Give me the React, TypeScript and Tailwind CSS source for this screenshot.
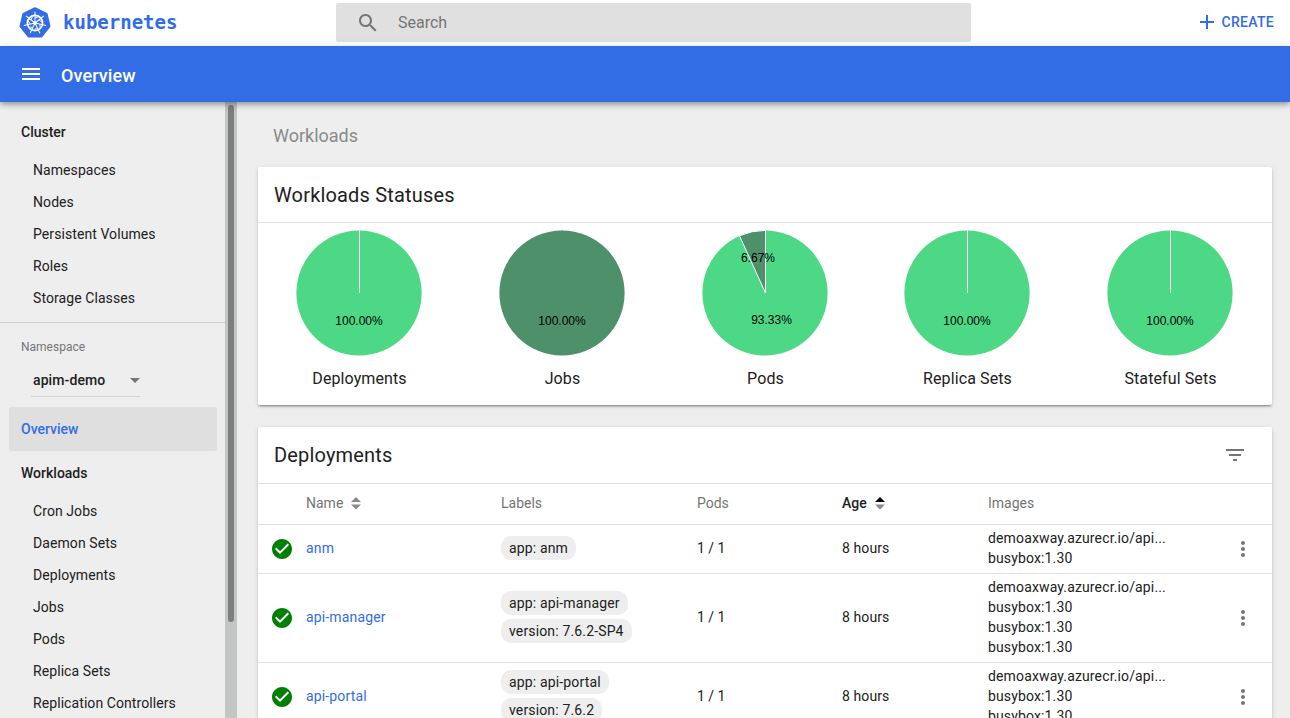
const ROBOTO = "font-['Roboto',sans-serif]";

function Icon({ d, className }: { d: string; className: string }) {
  return (
    <svg viewBox="0 0 24 24" className={className} fill="currentColor">
      <path d={d} />
    </svg>
  );
}

function Logo() {
  const spokes = [0, 1, 2, 3, 4, 5, 6];
  return (
    <svg viewBox="0 0 32 32" className="w-[32px] h-[32px] shrink-0">
      <path d="M16 1.2 L27.6 6.8 L30.5 19.3 L22.5 29.4 L9.5 29.4 L1.5 19.3 L4.4 6.8 Z" fill="#326de6" stroke="#326de6" strokeWidth="2" strokeLinejoin="round" />
      <circle cx="16" cy="16" r="7.6" fill="none" stroke="#fff" strokeWidth="1.7" />
      <circle cx="16" cy="16" r="1.7" fill="#fff" />
      {spokes.map((i) => (
        <g key={i} transform={`rotate(${(i * 360) / 7} 16 16)`}>
          <line x1="16" y1="16" x2="16" y2="4.6" stroke="#fff" strokeWidth="1" />
          <line x1="16" y1="11" x2="19.4" y2="10" stroke="#fff" strokeWidth="0.9" />
        </g>
      ))}
    </svg>
  );
}

function SortIcon({ active }: { active?: boolean }) {
  return (
    <svg viewBox="0 0 12 16" className="w-[12px] h-[16px] ml-[7px]">
      <path d="M1 7 L6 2 L11 7 Z" fill={active ? "#000" : "#8a8a8a"} />
      <path d="M1 9.5 L6 14.5 L11 9.5 Z" fill="#8a8a8a" />
    </svg>
  );
}

const CX = 64;
const LINE_X = 64.5;
const CY = 65;
const R = 62.6;

function Pie({ kind, label }: { kind: "ok" | "dark" | "pods"; label: string }) {
  const green = "#4dd886";
  const dark = "#4d9069";
  return (
    <div className="flex flex-col items-center">
      <svg viewBox="0 0 130 130" className="w-[130px] h-[130px] mt-[5px]">
        {kind === "pods" ? (
          <>
            <circle cx={CX} cy={CY} r={R} fill={green} />
            <path d={`M${LINE_X} ${CY} L${LINE_X} ${CY - R} A${R} ${R} 0 0 0 ${CX - 25.5} ${CY - 57.2} Z`} fill={dark} stroke="#fff" strokeWidth="1" />
            <text x="57" y="34" textAnchor="middle" className="font-['Liberation_Sans',sans-serif] text-[12px]" fill="#000">6.67%</text>
            <text x="70.5" y="96" textAnchor="middle" className="font-['Liberation_Sans',sans-serif] text-[12px]" fill="#000">93.33%</text>
          </>
        ) : (
          <>
            <circle cx={CX} cy={CY} r={R} fill={kind === "ok" ? green : dark} />
            <line x1={LINE_X} y1={CY} x2={LINE_X} y2={CY - R} stroke={kind === "ok" ? "#fff" : dark} strokeWidth="1" />
            <text x={CX} y="97" textAnchor="middle" className="font-['Liberation_Sans',sans-serif] text-[12px]" fill="#000">100.00%</text>
          </>
        )}
      </svg>
      <div className="mt-[11px] text-[16px] leading-[20px] text-[#212121] tracking-[0.1px]">{label}</div>
    </div>
  );
}

function NavItem({ children }: { children: string }) {
  return <div className="h-[32px] pl-[33px] flex items-center text-[14px] tracking-[0.08px] text-[#212121]">{children}</div>;
}

function NavHead({ children, className }: { children: string; className: string }) {
  return <div className={`pl-[21px] font-medium text-[14px] leading-[20px] text-[#212121] ${className}`}>{children}</div>;
}

function Chip({ children }: { children: string }) {
  return (
    <span className="inline-flex self-start h-[24px] items-center px-[8px] rounded-[10px] bg-[#eeeeee] text-[14px] tracking-[0.15px] text-[#212121]">
      {children}
    </span>
  );
}

const GRID = "grid grid-cols-[48px_195px_196px_145px_146px_1fr] items-center";

function Row({ name, chips, images }: { name: string; chips: string[]; images: string[] }) {
  return (
    <div className={`${GRID} pt-[3px] pb-[5px] border-b border-[#e0e0e0] text-[14px] text-[#212121]`}>
      <Icon
        className="w-[24px] h-[24px] ml-[12px] mt-[2px] text-[#008000]"
        d="M12 2C6.48 2 2 6.48 2 12s4.48 10 10 10 10-4.48 10-10S17.52 2 12 2zm-2 15l-5-5 1.41-1.41L10 14.17l7.59-7.59L19 8l-9 9z"
      />
      <div className="text-[#326de6] tracking-[0.15px]">{name}</div>
      <div className="flex flex-col gap-[4px]">
        {chips.map((c) => (
          <Chip key={c}>{c}</Chip>
        ))}
      </div>
      <div>1 / 1</div>
      <div className="tracking-[0.1px]">8 hours</div>
      <div className="flex items-center">
        <div className="w-[245px] leading-[20px] tracking-[0.14px]">
          {images.map((m, i) => (
            <div key={i}>{m}</div>
          ))}
        </div>
        <Icon
          className="w-[24px] h-[24px] -ml-[2px] mt-[2px] text-[#757575]"
          d="M12 8c1.1 0 2-.9 2-2s-.9-2-2-2-2 .9-2 2 .9 2 2 2zm0 2c-1.1 0-2 .9-2 2s.9 2 2 2 2-.9 2-2-.9-2-2-2zm0 6c-1.1 0-2 .9-2 2s.9 2 2 2 2-.9 2-2-.9-2-2-2z"
        />
      </div>
    </div>
  );
}

const CARD = "bg-white rounded-[2px] shadow-[0_3px_1px_-2px_rgba(0,0,0,0.2),0_2px_2px_0_rgba(0,0,0,0.14),0_1px_5px_0_rgba(0,0,0,0.12)]";
const IMG = "demoaxway.azurecr.io/api...";

export default function App() {
  return (
    <div className={`${ROBOTO} h-screen w-full overflow-hidden flex flex-col bg-[#eeeeee]`}>
      <header className="h-[46px] shrink-0 bg-white flex items-center">
        <div className="w-[336px] pl-[19px] flex items-center">
          <Logo />
          <span className="ml-[12px] -mt-[2px] font-['DejaVu_Sans_Mono',monospace] text-[19px] font-bold text-[#326de6]">kubernetes</span>
        </div>
        <div className="w-[635px] h-[39px] -mt-[1px] bg-[#e0e0e0] rounded-[2px] flex items-center pl-[20px]">
          <Icon
            className="w-[24px] h-[24px] text-[#757575]"
            d="M15.5 14h-.79l-.28-.27C15.41 12.59 16 11.11 16 9.5 16 5.91 13.09 3 9.5 3S3 5.91 3 9.5 5.91 16 9.5 16c1.61 0 3.09-.59 4.23-1.57l.27.28v.79l5 4.99L20.49 19l-4.99-5zm-6 0C7.01 14 5 11.99 5 9.5S7.01 5 9.5 5 14 7.01 14 9.5 11.99 14 9.5 14z"
          />
          <span className="ml-[18px] text-[16px] text-[#757575]">Search</span>
        </div>
        <div className="flex-1 flex items-center justify-end pr-[16px] -mt-[2px] text-[#326de6]">
          <Icon className="w-[24px] h-[24px]" d="M19 13h-6v6h-2v-6H5v-2h6V5h2v6h6v2z" />
          <span className="ml-[2px] text-[14px] font-medium tracking-[0.3px]">CREATE</span>
        </div>
      </header>

      <div className="relative z-10 h-[56px] shrink-0 bg-[#326de6] flex items-center pl-[19px] text-white shadow-[0_2px_4px_-1px_rgba(0,0,0,0.2),0_4px_5px_0_rgba(0,0,0,0.14),0_1px_10px_0_rgba(0,0,0,0.12)]">
        <Icon className="w-[24px] h-[24px]" d="M3 18h18v-2H3v2zm0-5h18v-2H3v2zm0-7v2h18V6H3z" />
        <span className="ml-[18px] mt-[2px] text-[18px] font-medium tracking-[0.1px]">Overview</span>
      </div>

      <div className="flex-1 flex min-h-0">
        <aside className="w-[237px] shrink-0 flex">
          <nav className="w-[225px] shrink-0 pt-[20px]">
            <NavHead className="mb-[12px]">Cluster</NavHead>
            {["Namespaces", "Nodes", "Persistent Volumes", "Roles", "Storage Classes"].map((t) => (
              <NavItem key={t}>{t}</NavItem>
            ))}
            <div className="h-px bg-[#d0d0d0] mt-[8px]" />
            <div className="pl-[21px] mt-[17px] text-[12px] leading-[14px] text-[#757575]">Namespace</div>
            <div className="ml-[31px] w-[109px] h-[32px] mt-[11px] border-b border-[#d4d4d4] flex items-center pl-[2px] text-[14px] font-medium tracking-[0.1px] text-[#212121]">
              <span>apim-demo</span>
              <span className="ml-auto w-0 h-0 border-x-[5px] border-x-transparent border-t-[5px] border-t-[#757575]" />
            </div>
            <div className="mx-[9px] mt-[10px] w-[208px] h-[44px] rounded-[2px] bg-[#dfdfdf] pl-[12px] flex items-center text-[14px] font-medium text-[#326de6]">
              Overview
            </div>
            <NavHead className="mt-[12px] mb-[12px]">Workloads</NavHead>
            {["Cron Jobs", "Daemon Sets", "Deployments", "Jobs", "Pods", "Replica Sets", "Replication Controllers"].map((t) => (
              <NavItem key={t}>{t}</NavItem>
            ))}
          </nav>
          <div className="w-[12px] shrink-0 bg-[#c3c5c4] pt-[3px] pl-[3px]">
            <div className="h-[517px] w-[6px] rounded-[3px] bg-[#7b807f]" />
          </div>
        </aside>

        <main className="flex-1 min-w-0 pl-[21px] pr-[18px]">
          <div className="h-[65px] pl-[15px] pt-[21px] text-[18px] leading-[26px] text-[#8a8a8a]">Workloads</div>

          <section className={`${CARD} h-[238px]`}>
            <div className="h-[56px] pl-[16px] flex items-center border-b border-[#e0e0e0] text-[20px] tracking-[0.17px] text-[#212121]">Workloads Statuses</div>
            <div className="grid grid-cols-[203px_203px_203px_201px_205px]">
              <Pie kind="ok" label="Deployments" />
              <Pie kind="dark" label="Jobs" />
              <Pie kind="pods" label="Pods" />
              <Pie kind="ok" label="Replica Sets" />
              <Pie kind="ok" label="Stateful Sets" />
            </div>
          </section>

          <section className={`${CARD} mt-[22px]`}>
            <div className="h-[57px] pl-[16px] pr-[25px] flex items-center justify-between border-b border-[#e0e0e0] text-[20px] tracking-[0.17px] text-[#212121]">
              <span>Deployments</span>
              <Icon className="w-[24px] h-[24px] text-[#757575]" d="M10 18h4v-2h-4v2zM3 6v2h18V6H3zm3 7h12v-2H6v2z" />
            </div>
            <div className={`${GRID} h-[41px] pb-[2px] border-b border-[#e0e0e0] text-[14px] text-[#757575]`}>
              <div />
              <div className="flex items-center">Name<SortIcon /></div>
              <div>Labels</div>
              <div>Pods</div>
              <div className="flex items-center font-medium text-[#212121]">Age<SortIcon active /></div>
              <div>Images</div>
            </div>
            <Row name="anm" chips={["app: anm"]} images={[IMG, "busybox:1.30"]} />
            <Row name="api-manager" chips={["app: api-manager", "version: 7.6.2-SP4"]} images={[IMG, "busybox:1.30", "busybox:1.30", "busybox:1.30"]} />
            <Row name="api-portal" chips={["app: api-portal", "version: 7.6.2"]} images={[IMG, "busybox:1.30", "busybox:1.30"]} />
          </section>
        </main>
      </div>
    </div>
  );
}
